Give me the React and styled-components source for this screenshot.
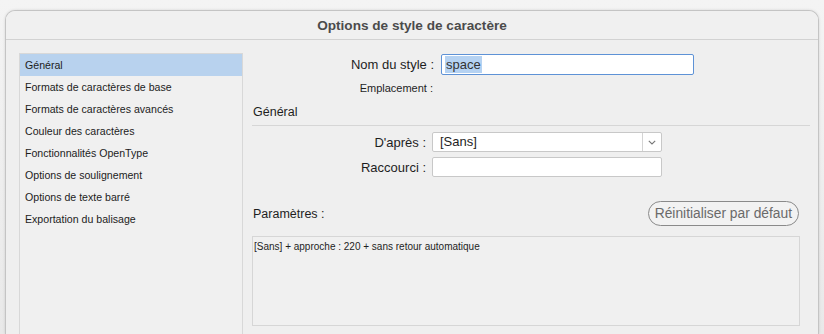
import React from "react";
import styled, { createGlobalStyle } from "styled-components";

const Global = createGlobalStyle`
  html, body { margin: 0; padding: 0; }
  *, *::before, *::after { box-sizing: border-box; }
  body {
    background: linear-gradient(#f4f4f4, #e9e9e9);
    font-family: "Liberation Sans", Arial, sans-serif;
    color: #1e1e1e;
    width: 824px;
    height: 334px;
    overflow: hidden;
  }
`;

const Window = styled.div`
  margin: 10px 5px 0 5px;
  height: 324px;
  background: #efefef;
  border: 1px solid #c4c4c4;
  border-bottom: none;
  border-radius: 10px 10px 0 0;
  box-shadow: 0 0 3px rgba(0, 0, 0, 0.12);
  overflow: hidden;
  display: flex;
  flex-direction: column;
`;

const TitleBar = styled.div`
  height: 29px;
  flex-shrink: 0;
  border-bottom: 1px solid #d2d2d2;
  display: flex;
  align-items: center;
  justify-content: center;
  font-weight: bold;
  font-size: 13.6px;
  color: #4b4b4b;
  background: #f0f0f0;
`;

const Body = styled.div`
  flex: 1;
  display: flex;
  padding: 13px 0 0 13px;
  min-height: 0;
`;

const List = styled.ul`
  list-style: none;
  margin: 0;
  padding: 0;
  width: 224px;
  border: 1px solid #d8d8d8;
  border-bottom: none;
  background: #f0f0f0;
`;

const Item = styled.li`
  height: 22px;
  line-height: 22px;
  padding-left: 5px;
  font-size: 10.6px;
  color: #1c1c1c;
  background: ${(p) => (p.$selected ? "#b8d2ee" : "transparent")};
`;

const Main = styled.div`
  flex: 1;
  padding: 1px 18px 0 9px;
  display: flex;
  flex-direction: column;
`;

const Row = styled.div`
  display: flex;
  align-items: center;
  gap: ${(p) => p.$gap || 6}px;
  height: ${(p) => p.$h}px;
  margin-top: ${(p) => p.$mt || 0}px;
`;

const Label = styled.span`
  width: ${(p) => p.$w}px;
  text-align: right;
  font-size: ${(p) => p.$size || 13}px;
  color: #1e1e1e;
  white-space: nowrap;
`;

const NameInput = styled.div`
  width: 253px;
  height: 21px;
  border: 1px solid #5e92d6;
  border-radius: 2px;
  background: #fff;
  display: flex;
  align-items: center;
  padding-left: 3px;
  font-size: 13px;
`;

const Selected = styled.span`
  background: #b5d2f2;
  color: #333;
  padding: 0 1px;
  line-height: 17px;
`;

const SectionTitle = styled.div`
  font-size: 12.5px;
  margin-top: 9px;
  height: 16px;
  line-height: 16px;
  padding-left: 1px;
`;

const Separator = styled.div`
  height: 1px;
  background: #d6d6d6;
  margin: 5px -10px 0 0;
`;

const Select = styled.div`
  width: 230px;
  height: 20px;
  border: 1px solid #c8c8c8;
  border-radius: 2px;
  background: #fff;
  display: flex;
  align-items: stretch;
  font-size: 13px;
`;

const SelectValue = styled.span`
  flex: 1;
  padding-left: 7px;
  line-height: 18px;
`;

const Chevron = styled.span`
  width: 19px;
  border-left: 1px solid #d4d4d4;
  display: flex;
  align-items: center;
  justify-content: center;
`;

const TextInput = styled.div`
  width: 230px;
  height: 20px;
  border: 1px solid #c8c8c8;
  border-radius: 2px;
  background: #fff;
`;

const ParamRow = styled.div`
  display: flex;
  align-items: center;
  justify-content: space-between;
  margin-top: 24px;
  height: 25px;
`;

const ParamLabel = styled.span`
  font-size: 12.5px;
  padding-left: 1px;
`;

const Button = styled.button`
  height: 25px;
  padding: 0 6px;
  margin-right: 1px;
  border: 1px solid #8a8a8a;
  border-radius: 13px;
  background: #f2f2f2;
  color: #6a6a6a;
  font-family: "Liberation Sans", Arial, sans-serif;
  font-size: 13.8px;
`;

const TextArea = styled.div`
  margin-top: 10px;
  height: 90px;
  border: 1px solid #d6d6d6;
  background: #f0f0f0;
  font-size: 10px;
  padding: 4px 1px;
  color: #1e1e1e;
`;

const items = [
  "Général",
  "Formats de caractères de base",
  "Formats de caractères avancés",
  "Couleur des caractères",
  "Fonctionnalités OpenType",
  "Options de soulignement",
  "Options de texte barré",
  "Exportation du balisage",
];

export default function App() {
  return (
    <>
      <Global />
      <Window>
        <TitleBar>Options de style de caractère</TitleBar>
        <Body>
          <List>
            {items.map((t, i) => (
              <Item key={t} $selected={i === 0}>
                {t}
              </Item>
            ))}
          </List>
          <Main>
            <Row $h={21} $gap={7}>
              <Label $w={182}>Nom du style :</Label>
              <NameInput>
                <Selected>space</Selected>
              </NameInput>
            </Row>
            <Row $h={14} $mt={6} $gap={7}>
              <Label $w={181} $size={11}>Emplacement :</Label>
            </Row>
            <SectionTitle>Général</SectionTitle>
            <Separator />
            <Row $h={20} $mt={6}>
              <Label $w={174}>D'après :</Label>
              <Select>
                <SelectValue>[Sans]</SelectValue>
                <Chevron>
                  <svg width="8" height="5" viewBox="0 0 8 5">
                    <path d="M0.8 0.8 L4 4 L7.2 0.8" fill="none" stroke="#777" strokeWidth="1.1" />
                  </svg>
                </Chevron>
              </Select>
            </Row>
            <Row $h={20} $mt={5}>
              <Label $w={174}>Raccourci :</Label>
              <TextInput />
            </Row>
            <ParamRow>
              <ParamLabel>Paramètres :</ParamLabel>
              <Button>Réinitialiser par défaut</Button>
            </ParamRow>
            <TextArea>[Sans] + approche : 220 + sans retour automatique</TextArea>
          </Main>
        </Body>
      </Window>
    </>
  );
}
